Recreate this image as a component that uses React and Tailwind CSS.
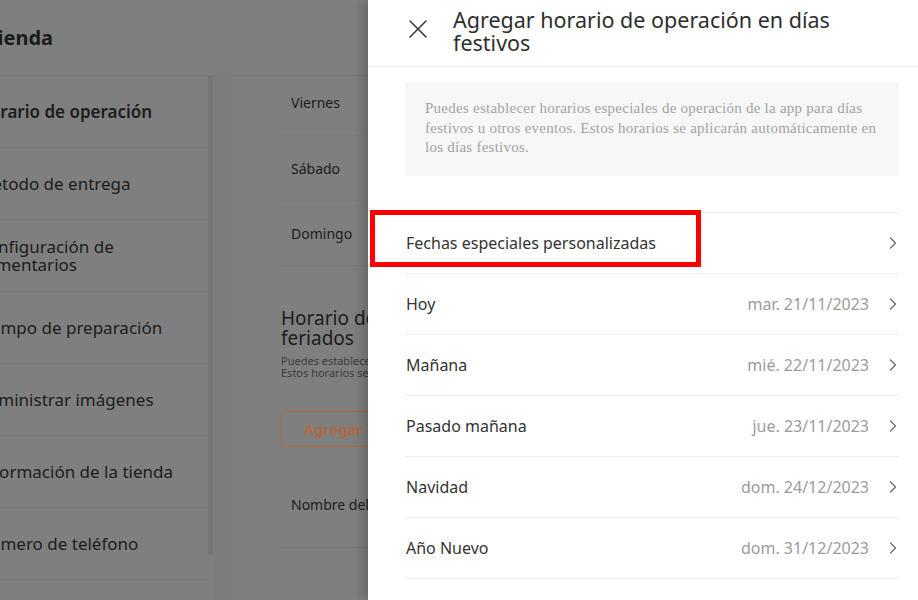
import React from "react";

const menu = [
  { label: "Horario de operación", active: true },
  { label: "Método de entrega" },
  { label: "Configuración de\ncomentarios" },
  { label: "Tiempo de preparación" },
  { label: "Administrar imágenes" },
  { label: "Información de la tienda" },
  { label: "Número de teléfono" },
];

const days = [
  { name: "Fechas especiales personalizadas", date: "" },
  { name: "Hoy", date: "mar. 21/11/2023" },
  { name: "Mañana", date: "mié. 22/11/2023" },
  { name: "Pasado mañana", date: "jue. 23/11/2023" },
  { name: "Navidad", date: "dom. 24/12/2023" },
  { name: "Año Nuevo", date: "dom. 31/12/2023" },
];

function Chevron() {
  return (
    <svg width="8" height="12" viewBox="0 0 8 12" fill="none" className="ml-[20px] shrink-0">
      <path d="M1.5 1 L6.5 6 L1.5 11" stroke="#6b6b6b" strokeWidth="1.3" strokeLinecap="round" strokeLinejoin="round" />
    </svg>
  );
}

export default function App() {
  return (
    <div
      className="relative w-[918px] h-[600px] overflow-hidden bg-[#7f7f7f] text-[#1c1c1c]"
      style={{ fontFamily: '"Noto Sans", "Open Sans", sans-serif' }}
    >
      {/* dimmed page behind the drawer */}
      <div className="flex flex-col h-full">
        <div className="h-[76px] shrink-0 border-b border-[#7a7a7a] flex items-center">
          <h1 className="-ml-[14px] text-[20px] font-bold">Tienda</h1>
        </div>

        <div className="flex flex-1 min-h-0">
          {/* sidebar */}
          <div className="w-[208px] shrink-0 overflow-hidden">
            {menu.map((m) => (
              <div key={m.label} className="h-[72px] border-b border-[#7a7a7a] flex items-center">
                <span
                  className={
                    "-ml-[23px] whitespace-pre text-[17px] leading-[18px] " +
                    (m.active ? "font-semibold" : "font-normal")
                  }
                >
                  {m.label}
                </span>
              </div>
            ))}
          </div>
          <div className="w-[5px] shrink-0">
            <div className="h-[479px] rounded-b-[3px] bg-[#767676]" />
          </div>
          <div className="w-[19px] shrink-0 bg-[#7c7d7c]" />

          {/* settings content */}
          <div className="flex-1 pl-[49px] overflow-hidden">
            <div className="h-[60px] border-b border-[#7a7a7a] flex items-center pl-[10px] pb-[6px] text-[14px]">
              Viernes
            </div>
            <div className="h-[65px] border-b border-[#7a7a7a] flex items-center pl-[10px] text-[14px]">
              Sábado
            </div>
            <div className="h-[65px] border-b border-[#7a7a7a] flex items-center pl-[10px] text-[14px]">
              Domingo
            </div>

            <h2 className="mt-[42px] text-[19px] leading-[20px] whitespace-nowrap">
              Horario de operación en días
              <br />
              feriados
            </h2>
            <p className="mt-[7px] text-[11px] leading-[12px] text-[#3c3c3c] whitespace-nowrap">
              Puedes establecer horarios especiales de operación
              <br />
              Estos horarios se aplicarán automáticamente
            </p>

            <button className="mt-[32px] h-[36px] w-[200px] rounded-[4px] border border-solid border-[#b5683a] text-left pl-[22px] text-[15px] font-semibold text-[#b5683a] whitespace-nowrap">
              Agregar horario
            </button>

            <div className="mt-[14px] h-[87px] border-b border-[#7a7a7a] flex items-center pl-[10px] text-[14px] whitespace-nowrap">
              Nombre del día festivo
            </div>
          </div>
        </div>
      </div>

      {/* drawer */}
      <div className="absolute top-0 right-0 w-[550px] h-full bg-white shadow-[-6px_0_10px_rgba(0,0,0,0.18)]">
        <div className="h-[67px] border-b border-[#ececec] flex items-start pt-[8px]">
          <svg width="18" height="18" viewBox="0 0 18 18" className="ml-[41px] mt-[12px] shrink-0">
            <path d="M1 1 L17 17 M17 1 L1 17" stroke="#333" strokeWidth="1.5" strokeLinecap="round" />
          </svg>
          <h2 className="ml-[26px] text-[21.5px] leading-[23px] text-[#2e2e2e] w-[420px]">
            Agregar horario de operación en días festivos
          </h2>
        </div>

        <div className="pl-[37px] pr-[19px]">
          <div
            className="mt-[15px] rounded-[4px] bg-[#f7f7f7] px-[20px] pt-[17px] pb-[18px] text-[15px] tracking-[0.25px] leading-[19.5px] text-[#a3a3a3]"
            style={{ fontFamily: '"Liberation Serif", "Times New Roman", serif' }}
          >
            Puedes establecer horarios especiales de operación de la app para días festivos u otros eventos.
            Estos horarios se aplicarán automáticamente en los días festivos.
          </div>

          <div className="mt-[36px] border-t border-[#eeeeee]">
            {days.map((d) => (
              <div
                key={d.name}
                className="h-[61px] border-b border-[#eeeeee] flex items-center justify-between pl-[1px] pr-[2px]"
              >
                <span className="text-[16px] text-[#333]">{d.name}</span>
                <div className="flex items-center">
                  <span className="text-[16px] text-[#9c9c9c]">{d.date}</span>
                  <Chevron />
                </div>
              </div>
            ))}
          </div>
        </div>
      </div>

      {/* highlight annotation */}
      <div className="absolute left-[370px] top-[210px] w-[331px] h-[57px] border-[5px] border-[#ff0000]" />
    </div>
  );
}
